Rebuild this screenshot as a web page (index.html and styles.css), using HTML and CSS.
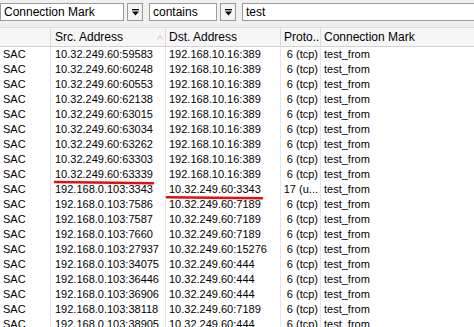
FILE: index.html
```html
<!DOCTYPE html>
<html>
<head>
<meta charset="utf-8">
<link rel="stylesheet" href="styles.css">
</head>
<body>
<div class="page">
  <div class="toolbar">
    <div class="field f1">Connection Mark</div>
    <div class="btn"><svg width="9" height="9" viewBox="0 0 9 9"><rect x="1" y="1" width="7" height="1.3" fill="#000"/><path d="M1 3.5 H8 L4.5 7.5 Z" fill="#000"/></svg></div>
    <div class="field f2">contains</div>
    <div class="btn"><svg width="9" height="9" viewBox="0 0 9 9"><rect x="1" y="1" width="7" height="1.3" fill="#000"/><path d="M1 3.5 H8 L4.5 7.5 Z" fill="#000"/></svg></div>
    <div class="field f3">test</div>
  </div>
  <div class="table">
    <div class="row head">
      <div class="c c1"></div>
      <div class="c c2 sort">Src. Address<svg class="arrow" width="6" height="5" viewBox="0 0 6 5"><path d="M0.5 4.5 L3 0.5 L5.5 4.5" fill="none" stroke="#c8c8c8" stroke-width="1"/></svg></div>
      <div class="c c3">Dst. Address</div>
      <div class="c c4 hl">Proto...</div>
      <div class="c c5">Connection Mark</div>
    </div>
    <div class="row"><div class="c c1">SAC</div><div class="c c2">10.32.249.60:59583</div><div class="c c3">192.168.10.16:389</div><div class="c c4">6 (tcp)</div><div class="c c5">test_from</div></div>
    <div class="row"><div class="c c1">SAC</div><div class="c c2">10.32.249.60:60248</div><div class="c c3">192.168.10.16:389</div><div class="c c4">6 (tcp)</div><div class="c c5">test_from</div></div>
    <div class="row"><div class="c c1">SAC</div><div class="c c2">10.32.249.60:60553</div><div class="c c3">192.168.10.16:389</div><div class="c c4">6 (tcp)</div><div class="c c5">test_from</div></div>
    <div class="row"><div class="c c1">SAC</div><div class="c c2">10.32.249.60:62138</div><div class="c c3">192.168.10.16:389</div><div class="c c4">6 (tcp)</div><div class="c c5">test_from</div></div>
    <div class="row"><div class="c c1">SAC</div><div class="c c2">10.32.249.60:63015</div><div class="c c3">192.168.10.16:389</div><div class="c c4">6 (tcp)</div><div class="c c5">test_from</div></div>
    <div class="row"><div class="c c1">SAC</div><div class="c c2">10.32.249.60:63034</div><div class="c c3">192.168.10.16:389</div><div class="c c4">6 (tcp)</div><div class="c c5">test_from</div></div>
    <div class="row"><div class="c c1">SAC</div><div class="c c2">10.32.249.60:63262</div><div class="c c3">192.168.10.16:389</div><div class="c c4">6 (tcp)</div><div class="c c5">test_from</div></div>
    <div class="row"><div class="c c1">SAC</div><div class="c c2">10.32.249.60:63303</div><div class="c c3">192.168.10.16:389</div><div class="c c4">6 (tcp)</div><div class="c c5">test_from</div></div>
    <div class="row"><div class="c c1">SAC</div><div class="c c2">10.32.249.60:63339</div><div class="c c3">192.168.10.16:389</div><div class="c c4">6 (tcp)</div><div class="c c5">test_from</div></div>
    <div class="row"><div class="c c1">SAC</div><div class="c c2">192.168.0.103:3343</div><div class="c c3">10.32.249.60:3343</div><div class="c c4">17 (u...</div><div class="c c5">test_from</div></div>
    <div class="row"><div class="c c1">SAC</div><div class="c c2">192.168.0.103:7586</div><div class="c c3">10.32.249.60:7189</div><div class="c c4">6 (tcp)</div><div class="c c5">test_from</div></div>
    <div class="row"><div class="c c1">SAC</div><div class="c c2">192.168.0.103:7587</div><div class="c c3">10.32.249.60:7189</div><div class="c c4">6 (tcp)</div><div class="c c5">test_from</div></div>
    <div class="row"><div class="c c1">SAC</div><div class="c c2">192.168.0.103:7660</div><div class="c c3">10.32.249.60:7189</div><div class="c c4">6 (tcp)</div><div class="c c5">test_from</div></div>
    <div class="row"><div class="c c1">SAC</div><div class="c c2">192.168.0.103:27937</div><div class="c c3">10.32.249.60:15276</div><div class="c c4">6 (tcp)</div><div class="c c5">test_from</div></div>
    <div class="row"><div class="c c1">SAC</div><div class="c c2">192.168.0.103:34075</div><div class="c c3">10.32.249.60:444</div><div class="c c4">6 (tcp)</div><div class="c c5">test_from</div></div>
    <div class="row"><div class="c c1">SAC</div><div class="c c2">192.168.0.103:36446</div><div class="c c3">10.32.249.60:444</div><div class="c c4">6 (tcp)</div><div class="c c5">test_from</div></div>
    <div class="row"><div class="c c1">SAC</div><div class="c c2">192.168.0.103:36906</div><div class="c c3">10.32.249.60:444</div><div class="c c4">6 (tcp)</div><div class="c c5">test_from</div></div>
    <div class="row"><div class="c c1">SAC</div><div class="c c2">192.168.0.103:38118</div><div class="c c3">10.32.249.60:7189</div><div class="c c4">6 (tcp)</div><div class="c c5">test_from</div></div>
    <div class="row"><div class="c c1">SAC</div><div class="c c2">192.168.0.103:38905</div><div class="c c3">10.32.249.60:444</div><div class="c c4">6 (tcp)</div><div class="c c5">test_from</div></div>
  </div>
  <svg class="marks" width="474" height="327" viewBox="0 0 474 327">
    <path d="M55 182 Q104 182.5 153 183.2" fill="none" stroke="#e01010" stroke-width="2.5" stroke-linecap="round"/>
    <path d="M167 197.2 Q214 197.6 262 198.2" fill="none" stroke="#e01010" stroke-width="2.5" stroke-linecap="round"/>
  </svg>
</div>
</body>
</html>
```

FILE: styles.css
```css
html, body {
  margin: 0;
  padding: 0;
  background: #ffffff;
}
body {
  font-family: "Liberation Sans", Arial, sans-serif;
  font-size: 11px;
  color: #000;
  overflow: hidden;
}
.page {
  position: relative;
  width: 474px;
  height: 327px;
  overflow: hidden;
}
.toolbar {
  background: #f0f0f0;
  border-bottom: 1px solid #dadada;
  display: flex;
  align-items: flex-start;
  padding-top: 3px;
  box-sizing: border-box;
  height: 28px;
}
.field {
  height: 18px;
  box-sizing: border-box;
  border: 1px solid #9a9a9a;
  background: #fff;
  line-height: 16px;
  padding-left: 3px;
  font-size: 12px;
  white-space: nowrap;
}
.f1 { width: 124px; }
.f2 { width: 68px; margin-left: 6px; }
.f3 { flex: 1; margin-left: 6px; margin-right: -4px; }
.btn {
  width: 16px;
  height: 18px;
  box-sizing: border-box;
  border: 1px solid #9a9a9a;
  background: #f4f4f4;
  margin-left: 3px;
  display: flex;
  align-items: center;
  justify-content: center;
}
.table {
  display: flex;
  flex-direction: column;
}
.row {
  display: grid;
  grid-template-columns: 51px 115px 115px 40px 1fr;
  height: 15px;
  line-height: 15px;
}
.row.head {
  height: 19px;
  line-height: 18px;
  background: #f6f6f6;
  border-bottom: 1px solid #d2d2d2;
  box-sizing: border-box;
  font-size: 12px;
}
.c {
  border-right: 1px solid #e6e6e6;
  white-space: nowrap;
  overflow: hidden;
}
.head .c {
  border-right-color: #dcdcdc;
}
.c5 { border-right: none; }
.c1 { padding-left: 3px; }
.c2 { padding-left: 4px; }
.c3 { padding-left: 3px; }
.c4 { text-align: right; padding-right: 2px; }
.head .c4 { text-align: left; padding-left: 3px; padding-right: 0; }
.c5 { padding-left: 3px; }
.sort {
  position: relative;
}
.arrow {
  position: absolute;
  left: 106px;
  top: 7px;
}
.marks {
  position: absolute;
  left: 0;
  top: 0;
  pointer-events: none;
}
```
